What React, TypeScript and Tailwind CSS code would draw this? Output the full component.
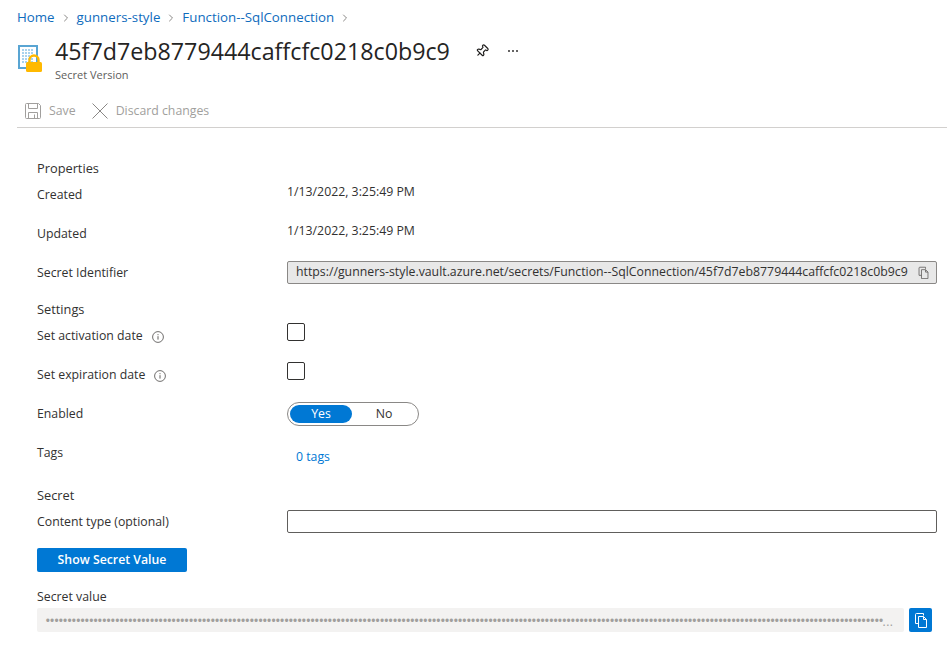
import { ChevronRight, Pin } from "lucide-react";

const Info = () => (
  <svg viewBox="0 0 12 12" className="w-[12px] h-[12px] text-[#605e5c]" fill="none" stroke="currentColor">
    <circle cx="6" cy="6" r="5.4" strokeWidth="0.9" />
    <path d="M6 5.2v3.4M6 3.2v1" strokeWidth="1" />
  </svg>
);

const CopyIcon = ({ className }: { className: string }) => (
  <svg viewBox="0 0 16 16" className={className} fill="none" stroke="currentColor" strokeWidth="1">
    <path d="M10.5 3.5V1.5H3.5a1 1 0 0 0-1 1V11.500h3" />
    <path d="M5.500 4.500h5l3 3v8h-8z" />
    <path d="M10.500 4.500v3h3" />
  </svg>
);

const KeyVaultIcon = () => (
  <svg viewBox="0 0 26 28" className="w-[26px] h-[28px] mt-[9px] shrink-0">
    <rect x="2" y="2" width="18" height="22" fill="#fff" stroke="#59a5d3" strokeWidth="2" />
    <g fill="#a9d3ee">
      {[5, 8, 11, 14].map((x) =>
        [5, 8, 11, 14, 17].map((y) => <rect key={`${x}-${y}`} x={x} y={y} width="2" height="2" />)
      )}
    </g>
    <path d="M12.500 19v-3a4.500 4.500 0 0 1 9 0v3" fill="none" stroke="#ffb900" strokeWidth="2.400" />
    <rect x="9" y="18" width="16" height="10" rx="1.500" fill="#ffb900" />
  </svg>
);

const SaveIcon = () => (
  <svg viewBox="0 0 16 16" className="w-[16px] h-[16px] ml-[8px]" fill="none" stroke="#a19f9d" strokeWidth="1">
    <path d="M.500 1.500a1 1 0 0 1 1-1h12l2 2v12a1 1 0 0 1-1 1h-13a1 1 0 0 1-1-1z" />
    <path d="M3.500.500v5h9v-5M3.500 15.500v-6h9v6M9.500 11.500v4" />
  </svg>
);

const Checkbox = () => <div className="w-[18px] h-[18px] mt-[3px] rounded-[2px] border border-[#323130] bg-white" />;

const Row = ({ label, children }: { label: React.ReactNode; children?: React.ReactNode }) => (
  <div className="flex h-[39px]">
    <div className="w-[250px] shrink-0 flex items-center gap-[9px] pb-[6px]">{label}</div>
    <div className="flex-1 min-w-0">{children}</div>
  </div>
);

const App = () => {
  return (
    <div className="w-[947px] h-[646px] overflow-hidden bg-white text-[#323130] text-[12.300px] font-['Open_Sans','Liberation_Sans',sans-serif]">
      <header className="pl-[17px] h-[95px]">
        <nav className="h-[35px] flex items-center text-[#0f6cbd] text-[13.300px] pt-[1px]">
          <a>Home</a>
          <ChevronRight className="w-[12px] h-[12px] mx-[5px] text-[#8a8886]" />
          <a>gunners-style</a>
          <ChevronRight className="w-[12px] h-[12px] mx-[5px] text-[#8a8886]" />
          <a>Function--SqlConnection</a>
          <ChevronRight className="w-[12px] h-[12px] mx-[5px] text-[#8a8886]" />
        </nav>
        <div className="flex items-start">
          <KeyVaultIcon />
          <div className="ml-[12px]">
            <h1 className="text-[23.250px] leading-[32px] font-medium text-[#252423]">45f7d7eb8779444caffcfc0218c0b9c9</h1>
            <p className="text-[11px] leading-[14px] text-[#605e5c] mt-[1px]">Secret Version</p>
          </div>
          <Pin className="w-[14px] h-[14px] ml-[25px] mt-[9px] rotate-45 text-[#201f1e]" />
          <div className="flex gap-[2px] ml-[19px] mt-[15px]">
            <span className="w-[2px] h-[2px] rounded-full bg-[#323130]" />
            <span className="w-[2px] h-[2px] rounded-full bg-[#323130]" />
            <span className="w-[2px] h-[2px] rounded-full bg-[#323130]" />
          </div>
        </div>
      </header>

      <div className="ml-[17px] h-[33px] border-b border-[#d2d0ce] flex items-center text-[#a19f9d]">
        <SaveIcon />
        <span className="ml-[8px]">Save</span>
        <svg viewBox="0 0 16 16" className="w-[16px] h-[16px] ml-[16px]" fill="none" stroke="#8a8886" strokeWidth="1">
          <path d="M.500.500l15 15M15.500.500l-15 15" />
        </svg>
        <span className="ml-[8px]">Discard changes</span>
      </div>

      <main className="pl-[37px] pr-[10px] pt-[30px]">
        <h2 className="h-[21px] leading-[21px] text-[12.800px]">Properties</h2>
        <Row label="Created">
          <p className="leading-[26px]">1/13/2022, 3:25:49 PM</p>
        </Row>
        <Row label="Updated">
          <p className="leading-[26px]">1/13/2022, 3:25:49 PM</p>
        </Row>
        <Row label="Secret Identifier">
          <div className="mt-[4px] h-[23px] rounded-[2px] border border-[#8a8886] bg-[#e8e8e8] flex items-center pl-[8px] pr-[6px] justify-between">
            <span className="whitespace-nowrap">https://gunners-style.vault.azure.net/secrets/Function--SqlConnection/45f7d7eb8779444caffcfc0218c0b9c9</span>
            <CopyIcon className="w-[13px] h-[13px] text-[#605e5c]" />
          </div>
        </Row>
        <h2 className="h-[23px] leading-[23px] mt-[2px] mb-[-1px] text-[12.800px]">Settings</h2>
        <Row label={<><span>Set activation date</span><Info /></>}>
          <Checkbox />
        </Row>
        <Row label={<><span>Set expiration date</span><Info /></>}>
          <Checkbox />
        </Row>
        <Row label="Enabled">
          <div className="w-[132px] h-[24px] mt-[4px] rounded-full border border-[#8a8886] flex items-center p-[2px]">
            <div className="w-[62px] h-[18px] rounded-full bg-[#0078d4] text-white flex items-center justify-center">Yes</div>
            <div className="flex-1 flex items-center justify-center">No</div>
          </div>
        </Row>
        <Row label="Tags">
          <a className="block pl-[9px] pt-[12px] leading-[16px] text-[#0078d4]">0 tags</a>
        </Row>
        <h2 className="h-[21px] leading-[21px] mt-[9px] text-[12.800px]">Secret</h2>
        <Row label="Content type (optional)">
          <div className="h-[23px] mt-[4px] rounded-[2px] border border-[#605e5c] bg-white" />
        </Row>
        <button className="block w-[150px] h-[24px] mt-[3px] rounded-[2px] bg-[#0078d4] text-white font-semibold">Show Secret Value</button>
        <label className="block mt-[17px] mb-[-1px] leading-[16px]">Secret value</label>
        <div className="flex items-center mt-[4px] gap-[5px] pr-[5px]">
          <div className="flex-1 h-[24px] rounded-[2px] bg-[#f3f2f1] text-[#a19f9d] pl-[8px] flex items-center overflow-hidden">
            <span className="whitespace-nowrap text-[15px] tracking-[-1.300px]">{"•".repeat(193)}</span>
            <span className="whitespace-nowrap text-[12px] leading-[12px] tracking-[0.5px] pt-[3px]">...</span>
          </div>
          <button className="w-[23px] h-[24px] rounded-[2px] bg-[#0078d4] text-white flex items-center justify-center">
            <CopyIcon className="w-[16px] h-[16px]" />
          </button>
        </div>
      </main>
    </div>
  );
};

export default App;
